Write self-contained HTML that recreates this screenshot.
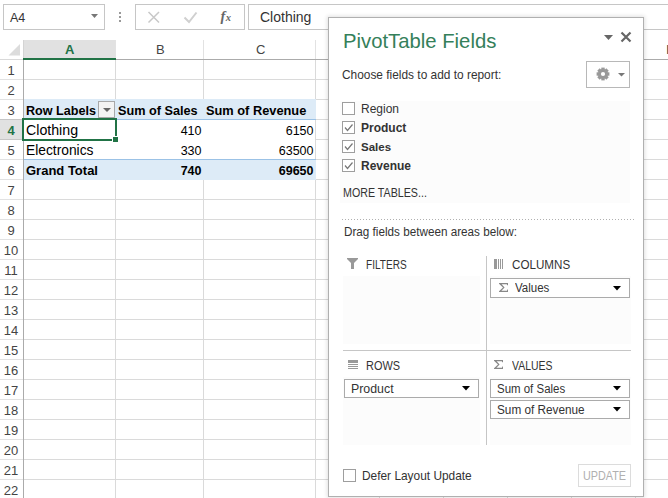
<!DOCTYPE html>
<html><head><meta charset="utf-8">
<style>
*{margin:0;padding:0;box-sizing:border-box}
html,body{width:668px;height:498px;overflow:hidden;background:#fff}
body{position:relative;font-family:"Liberation Sans",sans-serif;color:#222}
.a{position:absolute}
.t{position:absolute;white-space:pre;line-height:normal}
</style></head><body>
<div class="a" style="left:3px;top:4px;width:102px;height:26px;border:1px solid #c6c6c6;background:#fff;"></div>
<div class="t" style="left:10px;top:11.00px;font-size:12.5px;color:#333;">A4</div>
<svg class="a" style="left:91px;top:14px" width="7" height="4"><path d="M0 0 H7 L3.5 4 Z" fill="#777"/></svg>
<div class="a" style="left:119px;top:12px;width:2px;height:2px;background:#999;"></div>
<div class="a" style="left:119px;top:16px;width:2px;height:2px;background:#999;"></div>
<div class="a" style="left:119px;top:20px;width:2px;height:2px;background:#999;"></div>
<div class="a" style="left:135px;top:4px;width:110px;height:26px;border:1px solid #c6c6c6;background:#fff;"></div>
<svg class="a" style="left:146px;top:10px" width="16" height="14"><path d="M2.5 2 L13 12.5 M13 2 L2.5 12.5" stroke="#c8c8c8" stroke-width="1.5" fill="none"/></svg>
<svg class="a" style="left:182px;top:10px" width="18" height="14"><path d="M2.5 7.5 L7 12 L14.5 2.5" stroke="#d0d0d0" stroke-width="2" fill="none"/></svg>
<div class="t" style="left:220.5px;top:7.5px;font-family:'Liberation Serif',serif;font-style:italic;font-weight:700;font-size:14.5px;color:#666">f<span style="font-size:10.5px;position:relative;left:0.5px;top:0.5px">x</span></div>
<div class="a" style="left:248px;top:4px;width:430px;height:26px;border:1px solid #c6c6c6;background:#fff;"></div>
<div class="t" style="left:260px;top:9.00px;font-size:14px;color:#333;">Clothing</div>
<div class="a" style="left:115px;top:40px;width:1px;height:19px;background:#e2e2e2;"></div>
<div class="a" style="left:115px;top:60px;width:1px;height:440px;background:#dadada;"></div>
<div class="a" style="left:203px;top:40px;width:1px;height:19px;background:#e2e2e2;"></div>
<div class="a" style="left:203px;top:60px;width:1px;height:440px;background:#dadada;"></div>
<div class="a" style="left:315px;top:40px;width:1px;height:19px;background:#e2e2e2;"></div>
<div class="a" style="left:315px;top:60px;width:1px;height:440px;background:#dadada;"></div>
<div class="a" style="left:379px;top:40px;width:1px;height:19px;background:#e2e2e2;"></div>
<div class="a" style="left:379px;top:60px;width:1px;height:440px;background:#dadada;"></div>
<div class="a" style="left:443px;top:40px;width:1px;height:19px;background:#e2e2e2;"></div>
<div class="a" style="left:443px;top:60px;width:1px;height:440px;background:#dadada;"></div>
<div class="a" style="left:507px;top:40px;width:1px;height:19px;background:#e2e2e2;"></div>
<div class="a" style="left:507px;top:60px;width:1px;height:440px;background:#dadada;"></div>
<div class="a" style="left:571px;top:40px;width:1px;height:19px;background:#e2e2e2;"></div>
<div class="a" style="left:571px;top:60px;width:1px;height:440px;background:#dadada;"></div>
<div class="a" style="left:635px;top:40px;width:1px;height:19px;background:#e2e2e2;"></div>
<div class="a" style="left:635px;top:60px;width:1px;height:440px;background:#dadada;"></div>
<div class="a" style="left:0px;top:79px;width:23px;height:1px;background:#e2e2e2;"></div>
<div class="a" style="left:24px;top:79px;width:644px;height:1px;background:#dadada;"></div>
<div class="a" style="left:0px;top:99px;width:23px;height:1px;background:#e2e2e2;"></div>
<div class="a" style="left:24px;top:99px;width:644px;height:1px;background:#dadada;"></div>
<div class="a" style="left:0px;top:119px;width:23px;height:1px;background:#e2e2e2;"></div>
<div class="a" style="left:24px;top:119px;width:644px;height:1px;background:#dadada;"></div>
<div class="a" style="left:0px;top:139px;width:23px;height:1px;background:#e2e2e2;"></div>
<div class="a" style="left:24px;top:139px;width:644px;height:1px;background:#dadada;"></div>
<div class="a" style="left:0px;top:159px;width:23px;height:1px;background:#e2e2e2;"></div>
<div class="a" style="left:24px;top:159px;width:644px;height:1px;background:#dadada;"></div>
<div class="a" style="left:0px;top:179px;width:23px;height:1px;background:#e2e2e2;"></div>
<div class="a" style="left:24px;top:179px;width:644px;height:1px;background:#dadada;"></div>
<div class="a" style="left:0px;top:199px;width:23px;height:1px;background:#e2e2e2;"></div>
<div class="a" style="left:24px;top:199px;width:644px;height:1px;background:#dadada;"></div>
<div class="a" style="left:0px;top:219px;width:23px;height:1px;background:#e2e2e2;"></div>
<div class="a" style="left:24px;top:219px;width:644px;height:1px;background:#dadada;"></div>
<div class="a" style="left:0px;top:239px;width:23px;height:1px;background:#e2e2e2;"></div>
<div class="a" style="left:24px;top:239px;width:644px;height:1px;background:#dadada;"></div>
<div class="a" style="left:0px;top:259px;width:23px;height:1px;background:#e2e2e2;"></div>
<div class="a" style="left:24px;top:259px;width:644px;height:1px;background:#dadada;"></div>
<div class="a" style="left:0px;top:279px;width:23px;height:1px;background:#e2e2e2;"></div>
<div class="a" style="left:24px;top:279px;width:644px;height:1px;background:#dadada;"></div>
<div class="a" style="left:0px;top:299px;width:23px;height:1px;background:#e2e2e2;"></div>
<div class="a" style="left:24px;top:299px;width:644px;height:1px;background:#dadada;"></div>
<div class="a" style="left:0px;top:319px;width:23px;height:1px;background:#e2e2e2;"></div>
<div class="a" style="left:24px;top:319px;width:644px;height:1px;background:#dadada;"></div>
<div class="a" style="left:0px;top:339px;width:23px;height:1px;background:#e2e2e2;"></div>
<div class="a" style="left:24px;top:339px;width:644px;height:1px;background:#dadada;"></div>
<div class="a" style="left:0px;top:359px;width:23px;height:1px;background:#e2e2e2;"></div>
<div class="a" style="left:24px;top:359px;width:644px;height:1px;background:#dadada;"></div>
<div class="a" style="left:0px;top:379px;width:23px;height:1px;background:#e2e2e2;"></div>
<div class="a" style="left:24px;top:379px;width:644px;height:1px;background:#dadada;"></div>
<div class="a" style="left:0px;top:399px;width:23px;height:1px;background:#e2e2e2;"></div>
<div class="a" style="left:24px;top:399px;width:644px;height:1px;background:#dadada;"></div>
<div class="a" style="left:0px;top:419px;width:23px;height:1px;background:#e2e2e2;"></div>
<div class="a" style="left:24px;top:419px;width:644px;height:1px;background:#dadada;"></div>
<div class="a" style="left:0px;top:439px;width:23px;height:1px;background:#e2e2e2;"></div>
<div class="a" style="left:24px;top:439px;width:644px;height:1px;background:#dadada;"></div>
<div class="a" style="left:0px;top:459px;width:23px;height:1px;background:#e2e2e2;"></div>
<div class="a" style="left:24px;top:459px;width:644px;height:1px;background:#dadada;"></div>
<div class="a" style="left:0px;top:479px;width:23px;height:1px;background:#e2e2e2;"></div>
<div class="a" style="left:24px;top:479px;width:644px;height:1px;background:#dadada;"></div>
<div class="a" style="left:0px;top:499px;width:23px;height:1px;background:#e2e2e2;"></div>
<div class="a" style="left:24px;top:499px;width:644px;height:1px;background:#dadada;"></div>
<div class="a" style="left:0px;top:59px;width:23px;height:1px;background:#d9d9d9;"></div>
<div class="a" style="left:23px;top:59px;width:645px;height:1px;background:#ababab;"></div>
<div class="a" style="left:23px;top:40px;width:1px;height:19px;background:#d4d4d4;"></div>
<div class="a" style="left:23px;top:59px;width:1px;height:441px;background:#ababab;"></div>
<div class="a" style="left:24px;top:40px;width:91px;height:18px;background:#e1e1e1;"></div>
<div class="a" style="left:23px;top:58px;width:93px;height:2px;background:#217346;"></div>
<svg class="a" style="left:8px;top:44px" width="13" height="12"><path d="M0.5 11.5 L12 11.5 L12 0 Z" fill="#dcdcdc"/></svg>
<div class="a" style="left:0px;top:120px;width:23px;height:19px;background:#e1e1e1;"></div>
<div class="a" style="left:0px;top:119px;width:23px;height:1px;background:#c6c6c6;"></div>
<div class="a" style="left:0px;top:139px;width:23px;height:1px;background:#c6c6c6;"></div>
<div class="t" style="left:65px;top:42.00px;font-size:13px;color:#217346;font-weight:700;">A</div>
<div class="t" style="left:156px;top:42.00px;font-size:13px;color:#444;">B</div>
<div class="t" style="left:256px;top:42.00px;font-size:13px;color:#444;">C</div>
<div class="t" style="left:666px;top:42.00px;font-size:13px;color:#444;">I</div>
<div class="t" style="left:0;top:63px;width:22px;text-align:center;font-size:13px;color:#444">1</div>
<div class="t" style="left:0;top:83px;width:22px;text-align:center;font-size:13px;color:#444">2</div>
<div class="t" style="left:0;top:103px;width:22px;text-align:center;font-size:13px;color:#444">3</div>
<div class="t" style="left:0;top:123px;width:22px;text-align:center;font-size:13px;font-weight:700;color:#217346">4</div>
<div class="t" style="left:0;top:143px;width:22px;text-align:center;font-size:13px;color:#444">5</div>
<div class="t" style="left:0;top:163px;width:22px;text-align:center;font-size:13px;color:#444">6</div>
<div class="t" style="left:0;top:183px;width:22px;text-align:center;font-size:13px;color:#444">7</div>
<div class="t" style="left:0;top:203px;width:22px;text-align:center;font-size:13px;color:#444">8</div>
<div class="t" style="left:0;top:223px;width:22px;text-align:center;font-size:13px;color:#444">9</div>
<div class="t" style="left:0;top:243px;width:22px;text-align:center;font-size:13px;color:#444">10</div>
<div class="t" style="left:0;top:263px;width:22px;text-align:center;font-size:13px;color:#444">11</div>
<div class="t" style="left:0;top:283px;width:22px;text-align:center;font-size:13px;color:#444">12</div>
<div class="t" style="left:0;top:303px;width:22px;text-align:center;font-size:13px;color:#444">13</div>
<div class="t" style="left:0;top:323px;width:22px;text-align:center;font-size:13px;color:#444">14</div>
<div class="t" style="left:0;top:343px;width:22px;text-align:center;font-size:13px;color:#444">15</div>
<div class="t" style="left:0;top:363px;width:22px;text-align:center;font-size:13px;color:#444">16</div>
<div class="t" style="left:0;top:383px;width:22px;text-align:center;font-size:13px;color:#444">17</div>
<div class="t" style="left:0;top:403px;width:22px;text-align:center;font-size:13px;color:#444">18</div>
<div class="t" style="left:0;top:423px;width:22px;text-align:center;font-size:13px;color:#444">19</div>
<div class="t" style="left:0;top:443px;width:22px;text-align:center;font-size:13px;color:#444">20</div>
<div class="t" style="left:0;top:463px;width:22px;text-align:center;font-size:13px;color:#444">21</div>
<div class="t" style="left:0;top:483px;width:22px;text-align:center;font-size:13px;color:#444">22</div>
<div class="a" style="left:24px;top:99px;width:292px;height:20px;background:#ddebf7;"></div>
<div class="a" style="left:24px;top:119px;width:292px;height:1px;background:#9bc2e6;"></div>
<div class="a" style="left:24px;top:120px;width:291px;height:39px;background:#fff;"></div>
<div class="a" style="left:24px;top:159px;width:292px;height:1px;background:#9bc2e6;"></div>
<div class="a" style="left:24px;top:160px;width:292px;height:20px;background:#ddebf7;"></div>
<div class="a" style="left:98px;top:101px;width:17px;height:17px;border:1px solid #a8a8a8;background:#f3f3f3;"></div>
<svg class="a" style="left:102.5px;top:108px" width="8" height="4"><path d="M0 0 H8 L4.0 4 Z" fill="#666"/></svg>
<div class="t" style="left:26px;top:104.00px;font-size:12.6px;color:#000;font-weight:700;">Row Labels</div>
<div class="t" style="left:118px;top:104.00px;font-size:12.7px;color:#000;font-weight:700;">Sum of Sales</div>
<div class="t" style="left:206px;top:103.00px;font-size:12.8px;color:#000;font-weight:700;">Sum of Revenue</div>
<div class="t" style="left:26px;top:122.00px;font-size:14.2px;color:#000;">Clothing</div>
<div class="t" style="left:26px;top:143.00px;font-size:13.8px;color:#000;">Electronics</div>
<div class="t" style="left:26px;top:163.00px;font-size:13px;color:#000;font-weight:700;">Grand Total</div>
<div class="t" style="left:51.5px;top:124.00px;width:150px;text-align:right;font-size:12.5px;font-weight:400;color:#000">410</div>
<div class="t" style="left:51.5px;top:144.00px;width:150px;text-align:right;font-size:12.5px;font-weight:400;color:#000">330</div>
<div class="t" style="left:51.5px;top:164.00px;width:150px;text-align:right;font-size:12.5px;font-weight:700;color:#000">740</div>
<div class="t" style="left:163.5px;top:124.00px;width:150px;text-align:right;font-size:12.5px;font-weight:400;color:#000">6150</div>
<div class="t" style="left:163.5px;top:144.00px;width:150px;text-align:right;font-size:12.5px;font-weight:400;color:#000">63500</div>
<div class="t" style="left:163.5px;top:164.00px;width:150px;text-align:right;font-size:12.5px;font-weight:700;color:#000">69650</div>
<div class="a" style="left:22px;top:118px;width:95px;height:23px;border:2px solid #217346"></div>
<div class="a" style="left:112px;top:136px;width:7px;height:7px;background:#217346;border:1px solid #fff"></div>
<div class="a" style="left:328px;top:17px;width:316px;height:480px;background:#fff;border:1px solid #b0b0b0;box-shadow:0 0 4px 1px rgba(0,0,0,0.12)"></div>
<div class="t" style="left:343px;top:30.00px;font-size:20.3px;color:#34805a;">PivotTable Fields</div>
<svg class="a" style="left:604px;top:35px" width="9" height="5"><path d="M0 0 H9 L4.5 5 Z" fill="#666"/></svg>
<svg class="a" style="left:619px;top:30px" width="14" height="14"><path d="M2.5 2.5 L11.5 11.5 M11.5 2.5 L2.5 11.5" stroke="#666" stroke-width="2.2" fill="none"/></svg>
<div class="a" style="left:586px;top:61px;width:44px;height:27px;border:1px solid #b8b8b8;background:#fff;"></div>
<svg class="a" style="left:595.5px;top:66.5px" width="14" height="14" viewBox="0 0 14 14"><g fill="#999"><circle cx="7" cy="7" r="5"/><rect x="5.3" y="0.6" width="3.4" height="12.8"/><rect x="0.6" y="5.3" width="12.8" height="3.4"/><rect x="5.3" y="0.6" width="3.4" height="12.8" transform="rotate(45 7 7)"/><rect x="5.3" y="0.6" width="3.4" height="12.8" transform="rotate(-45 7 7)"/></g><circle cx="7" cy="7" r="2.1" fill="#fff"/></svg>
<svg class="a" style="left:618px;top:73px" width="7" height="3.5"><path d="M0 0 H7 L3.5 3.5 Z" fill="#777"/></svg>
<div class="t" style="left:342px;top:68.00px;font-size:11.9px;color:#333;">Choose fields to add to report:</div>
<div class="a" style="left:340px;top:101px;width:290px;height:102px;background:#fcfcfc;"></div>
<div class="a" style="left:342px;top:102px;width:13px;height:13px;border:1px solid #9e9e9e;background:#fff;"></div>
<div class="a" style="left:342px;top:121px;width:13px;height:13px;border:1px solid #9e9e9e;background:#fff;"></div>
<div class="a" style="left:342px;top:140px;width:13px;height:13px;border:1px solid #9e9e9e;background:#fff;"></div>
<div class="a" style="left:342px;top:159px;width:13px;height:13px;border:1px solid #9e9e9e;background:#fff;"></div>
<svg class="a" style="left:342px;top:121px" width="13" height="13"><path d="M3 6.5 L5.5 9.5 L10.5 3.5" stroke="#777" stroke-width="1.2" fill="none"/></svg>
<svg class="a" style="left:342px;top:140px" width="13" height="13"><path d="M3 6.5 L5.5 9.5 L10.5 3.5" stroke="#777" stroke-width="1.2" fill="none"/></svg>
<svg class="a" style="left:342px;top:159px" width="13" height="13"><path d="M3 6.5 L5.5 9.5 L10.5 3.5" stroke="#777" stroke-width="1.2" fill="none"/></svg>
<div class="t" style="left:361px;top:102.00px;font-size:12px;color:#333;">Region</div>
<div class="t" style="left:361px;top:121.00px;font-size:12px;color:#333;font-weight:700;">Product</div>
<div class="t" style="left:361px;top:141.00px;font-size:11.5px;color:#333;font-weight:700;">Sales</div>
<div class="t" style="left:361px;top:159.00px;font-size:12px;color:#333;font-weight:700;">Revenue</div>
<div class="t" style="left:343px;top:186.00px;font-size:12px;color:#333;transform:scaleX(0.89);transform-origin:0 0;">MORE TABLES...</div>
<div class="a" style="left:342px;top:219px;width:292px;height:1px;background:repeating-linear-gradient(90deg,#b0b0b0 0 1px,transparent 1px 3px)"></div>
<div class="t" style="left:344px;top:225.00px;font-size:12px;color:#333;transform:scaleX(0.975);transform-origin:0 0;">Drag fields between areas below:</div>
<div class="a" style="left:486px;top:256px;width:1px;height:189px;background:#c6c6c6;"></div>
<div class="a" style="left:343px;top:350px;width:288px;height:1px;background:#c6c6c6;"></div>
<div class="a" style="left:343px;top:276px;width:137px;height:68px;background:#fcfcfc;"></div>
<div class="a" style="left:490px;top:276px;width:141px;height:68px;background:#fcfcfc;"></div>
<div class="a" style="left:343px;top:377px;width:137px;height:68px;background:#fcfcfc;"></div>
<div class="a" style="left:490px;top:377px;width:141px;height:68px;background:#fcfcfc;"></div>
<svg class="a" style="left:347px;top:258px" width="12" height="11"><path d="M0 0 H11 V1 L7 5 V11 H4 V5 L0 1 Z" fill="#999"/></svg>
<div class="t" style="left:366px;top:258.00px;font-size:12px;color:#333;transform:scaleX(0.84);transform-origin:0 0;">FILTERS</div>
<svg class="a" style="left:494px;top:259px" width="9" height="10"><rect x="0" y="0" width="3" height="10" fill="#999"/><rect x="4" y="0" width="1" height="10" fill="#999"/><rect x="6" y="0" width="1" height="10" fill="#999"/><rect x="8" y="0" width="1" height="10" fill="#999"/></svg>
<div class="t" style="left:512px;top:258.00px;font-size:12px;color:#333;transform:scaleX(0.97);transform-origin:0 0;">COLUMNS</div>
<svg class="a" style="left:348px;top:360px" width="10" height="9"><rect x="0" y="0" width="10" height="3" fill="#999"/><rect x="0" y="4" width="10" height="1" fill="#999"/><rect x="0" y="6" width="10" height="1" fill="#999"/><rect x="0" y="8" width="10" height="1" fill="#999"/></svg>
<div class="t" style="left:366px;top:359.00px;font-size:12px;color:#333;transform:scaleX(0.91);transform-origin:0 0;">ROWS</div>
<svg class="a" style="left:494px;top:360px" width="10" height="9"><path d="M0 0 H9 V2.3 H8.2 L7.8 1.3 H2.6 L5.6 4.4 L2.4 7.7 H8 L8.3 6.6 H9 V9 H0 V8.2 L4 4.4 L0 0.8 Z" fill="#888"/></svg>
<div class="t" style="left:512px;top:359.00px;font-size:12px;color:#333;transform:scaleX(0.87);transform-origin:0 0;">VALUES</div>
<div class="a" style="left:490px;top:278px;width:140px;height:20px;border:1px solid #ababab;background:#fff;"></div>
<svg class="a" style="left:499px;top:283px" width="10" height="9"><path d="M0 0 H9 V2.3 H8.2 L7.8 1.3 H2.6 L5.6 4.4 L2.4 7.7 H8 L8.3 6.6 H9 V9 H0 V8.2 L4 4.4 L0 0.8 Z" fill="#888"/></svg>
<div class="t" style="left:515px;top:281.00px;font-size:12px;color:#333;transform:scaleX(0.96);transform-origin:0 0;">Values</div>
<svg class="a" style="left:613px;top:286px" width="8" height="4.5"><path d="M0 0 H8 L4.0 4.5 Z" fill="#000"/></svg>
<div class="a" style="left:344px;top:379px;width:135px;height:19px;border:1px solid #ababab;background:#fff;"></div>
<div class="t" style="left:351px;top:382.00px;font-size:12px;color:#333;transform:scaleX(1.03);transform-origin:0 0;">Product</div>
<svg class="a" style="left:462px;top:386px" width="8" height="4.5"><path d="M0 0 H8 L4.0 4.5 Z" fill="#000"/></svg>
<div class="a" style="left:490px;top:379px;width:140px;height:19px;border:1px solid #ababab;background:#fff;"></div>
<div class="t" style="left:497px;top:382.00px;font-size:12px;color:#333;transform:scaleX(0.955);transform-origin:0 0;">Sum of Sales</div>
<svg class="a" style="left:613px;top:386px" width="8" height="4.5"><path d="M0 0 H8 L4.0 4.5 Z" fill="#000"/></svg>
<div class="a" style="left:490px;top:400px;width:140px;height:19px;border:1px solid #ababab;background:#fff;"></div>
<div class="t" style="left:497px;top:403.00px;font-size:12px;color:#333;transform:scaleX(0.98);transform-origin:0 0;">Sum of Revenue</div>
<svg class="a" style="left:613px;top:407px" width="8" height="4.5"><path d="M0 0 H8 L4.0 4.5 Z" fill="#000"/></svg>
<div class="a" style="left:343px;top:469px;width:13px;height:13px;border:1px solid #9e9e9e;background:#fff;"></div>
<div class="t" style="left:362px;top:469.00px;font-size:11.9px;color:#333;">Defer Layout Update</div>
<div class="a" style="left:578px;top:464px;width:53px;height:23px;border:1px solid #dcdcdc;background:#fff;"></div>
<div class="t" style="left:583px;top:469.00px;font-size:12px;color:#b0b0b0;transform:scaleX(0.9);transform-origin:0 0;">UPDATE</div>
</body></html>
